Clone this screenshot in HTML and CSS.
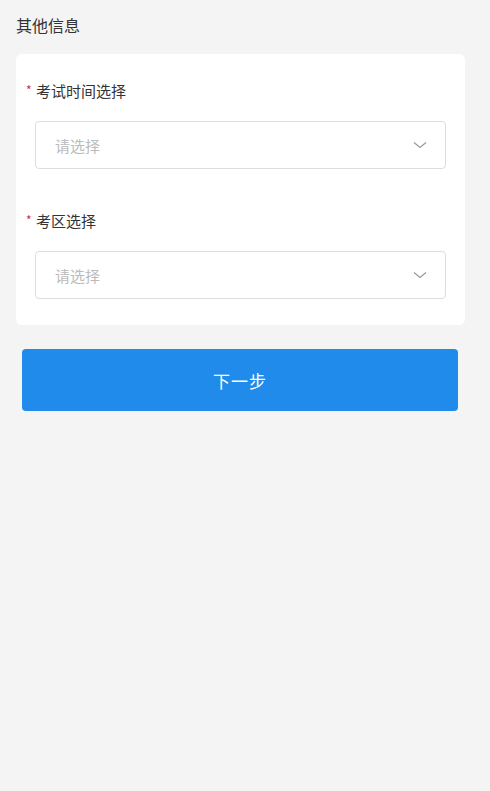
FILE: index.html
```html
<!DOCTYPE html>
<html lang="zh-CN">
<head>
    <meta charset="UTF-8">
    <meta name="viewport" content="width=device-width, initial-scale=1.0">
    <title>其他信息</title>
    <link rel="stylesheet" href="styles.css">
</head>
<body>
    <div class="page">
        <div class="section-title">其他信息</div>

        <div class="form-card">
            <div class="form-item">
                <div class="form-label"><span class="required">*</span>考试时间选择</div>
                <div class="select">
                    <span class="placeholder">请选择</span>
                    <svg class="arrow" width="14" height="8" viewBox="0 0 14 8">
                        <path d="M1 1.5 L7 6.5 L13 1.5" fill="none" stroke="#999" stroke-width="1.2"/>
                    </svg>
                </div>
            </div>

            <div class="form-item">
                <div class="form-label"><span class="required">*</span>考区选择</div>
                <div class="select">
                    <span class="placeholder">请选择</span>
                    <svg class="arrow" width="14" height="8" viewBox="0 0 14 8">
                        <path d="M1 1.5 L7 6.5 L13 1.5" fill="none" stroke="#999" stroke-width="1.2"/>
                    </svg>
                </div>
            </div>
        </div>

        <div class="actions">
            <button class="next-button">下一步</button>
        </div>
    </div>
</body>
</html>
```

FILE: styles.css
```css
html, body {
    margin: 0;
    padding: 0;
    height: 100%;
}
body {
    font-family: "Noto Sans CJK SC", "Noto Sans", sans-serif;
    background: #f4f4f4;
    color: #333;
}
.page {
    width: 467px;
    min-height: 100%;
    background: #f4f4f4;
    box-sizing: border-box;
    padding: 14px 2px 0 16px;
}
.section-title {
    font-size: 16px;
    line-height: 22px;
    color: #333;
}
.form-card {
    margin-top: 18px;
    background: #fff;
    border-radius: 6px;
    padding: 27px 19px 26px 10px;
}
.form-item + .form-item {
    margin-top: 42px;
}
.form-label {
    font-size: 15px;
    line-height: 20px;
    color: #333;
    display: flex;
    align-items: center;
}
.required {
    color: #d4303e;
    font-size: 12px;
    line-height: 12px;
    width: 10px;
    margin-top: -2px;
}
.select {
    margin: 20px 0 0 9px;
    height: 48px;
    border: 1px solid #ddd;
    border-radius: 4px;
    box-sizing: border-box;
    display: flex;
    align-items: center;
    justify-content: space-between;
    padding: 0 18px 0 19px;
}
.placeholder {
    font-size: 15px;
    color: #bbb;
}
.arrow {
    display: block;
}
.actions {
    padding: 24px 7px 0 6px;
}
.next-button {
    display: block;
    width: 100%;
    height: 62px;
    border: none;
    border-radius: 4px;
    background: #208bea;
    color: #fff;
    font-family: inherit;
    font-size: 17px;
    letter-spacing: 1px;
}
```
